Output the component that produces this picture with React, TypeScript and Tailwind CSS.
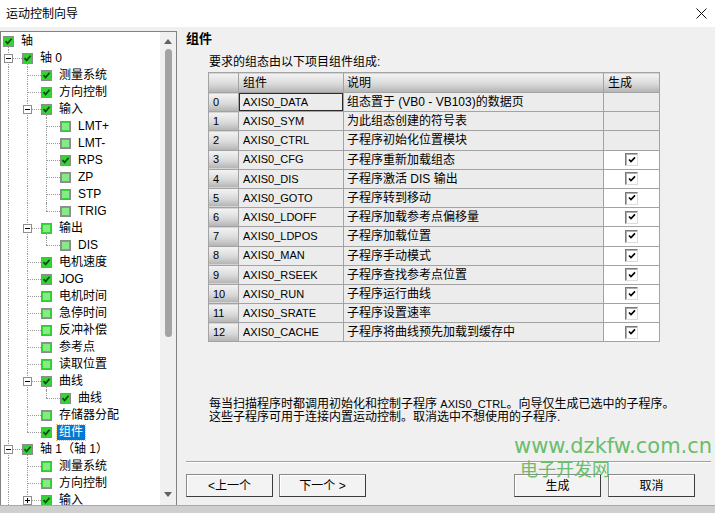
import React from 'react';

type Node = { l: number; t: string; c: boolean; e?: '-' | '+'; s?: boolean };

const tree: Node[] = [
    { l: 0, t: '轴', c: true },
    { l: 1, t: '轴 0', c: true, e: '-' },
    { l: 2, t: '测量系统', c: true },
    { l: 2, t: '方向控制', c: true },
    { l: 2, t: '输入', c: true, e: '-' },
    { l: 3, t: 'LMT+', c: false },
    { l: 3, t: 'LMT-', c: false },
    { l: 3, t: 'RPS', c: true },
    { l: 3, t: 'ZP', c: false },
    { l: 3, t: 'STP', c: false },
    { l: 3, t: 'TRIG', c: false },
    { l: 2, t: '输出', c: false, e: '-' },
    { l: 3, t: 'DIS', c: false },
    { l: 2, t: '电机速度', c: true },
    { l: 2, t: 'JOG', c: true },
    { l: 2, t: '电机时间', c: false },
    { l: 2, t: '急停时间', c: false },
    { l: 2, t: '反冲补偿', c: false },
    { l: 2, t: '参考点', c: false },
    { l: 2, t: '读取位置', c: false },
    { l: 2, t: '曲线', c: true, e: '-' },
    { l: 3, t: '曲线', c: true },
    { l: 2, t: '存储器分配', c: false },
    { l: 2, t: '组件', c: true, s: true },
    { l: 1, t: '轴 1（轴 1）', c: true, e: '-' },
    { l: 2, t: '测量系统', c: false },
    { l: 2, t: '方向控制', c: false },
    { l: 2, t: '输入', c: true, e: '+' },
];

type Row = Node & { next: boolean; path: boolean[] };

function buildRows(): Row[] {
    const stack: boolean[] = [];
    return tree.map((n, i) => {
        let next = n.l > 0;
        for (let j = i + 1; j < tree.length; j++) {
            if (tree[j].l < n.l) {
                next = false;
                break;
            }
            if (tree[j].l === n.l) {
                next = true;
                break;
            }
        }
        stack[n.l] = next;
        return { ...n, next, path: stack.slice(0, n.l + 1) };
    });
}

const ROW_H = 17;

const comps: [string, string, boolean][] = [
    ['AXIS0_DATA', '组态置于 (VB0 - VB103)的数据页', false],
    ['AXIS0_SYM', '为此组态创建的符号表', false],
    ['AXIS0_CTRL', '子程序初始化位置模块', false],
    ['AXIS0_CFG', '子程序重新加载组态', true],
    ['AXIS0_DIS', '子程序激活 DIS 输出', true],
    ['AXIS0_GOTO', '子程序转到移动', true],
    ['AXIS0_LDOFF', '子程序加载参考点偏移量', true],
    ['AXIS0_LDPOS', '子程序加载位置', true],
    ['AXIS0_MAN', '子程序手动模式', true],
    ['AXIS0_RSEEK', '子程序查找参考点位置', true],
    ['AXIS0_RUN', '子程序运行曲线', true],
    ['AXIS0_SRATE', '子程序设置速率', true],
    ['AXIS0_CACHE', '子程序将曲线预先加载到缓存中', true],
];

const GreenBox: React.FC<{ checked: boolean }> = ({ checked }) => (
    <span className="flex h-[11px] w-[11px] shrink-0 items-center justify-center border border-[#8c8c8c] bg-[#33d433]">
        {checked ? (
            <svg width="9" height="9" viewBox="0 0 9 9">
                <path d="M1.5 4.2 L3.6 6.4 L7.6 1.8" stroke="#0f4a14" strokeWidth="1.7" fill="none" />
            </svg>
        ) : (
            <span className="h-[7px] w-[7px] bg-[#86ea86]" />
        )}
    </span>
);

const Dot: React.FC<{ v?: boolean; left: number; top: number; len: number }> = ({ v, left, top, len }) =>
    v ? (
        <span
            className="absolute border-l border-dotted border-[#9a9a9a]"
            style={{ left, top, height: len }}
        />
    ) : (
        <span
            className="absolute border-t border-dotted border-[#9a9a9a]"
            style={{ left, top, width: len }}
        />
    );

const TreeRow: React.FC<{ r: Row }> = ({ r }) => {
    const L = r.l;
    const mid = Math.floor(ROW_H / 2);
    const boxLeft = 2 + 19 * L;
    const lineX = (k: number) => 7 + 19 * k;
    return (
        <div className="relative flex items-center" style={{ height: ROW_H, paddingLeft: boxLeft }}>
            {Array.from({ length: Math.max(0, L - 1) }).map((_, k) =>
                r.path[k + 1] ? <Dot key={k} v left={lineX(k)} top={0} len={ROW_H} /> : null,
            )}
            {L > 0 && (
                <>
                    <Dot v left={lineX(L - 1)} top={0} len={r.next ? ROW_H : mid} />
                    <Dot left={lineX(L - 1)} top={mid} len={boxLeft - lineX(L - 1)} />
                </>
            )}
            {r.e === '-' && <Dot v left={lineX(L)} top={mid + 5} len={ROW_H - mid - 5} />}
            {L === 0 && <Dot v left={lineX(0)} top={mid + 5} len={ROW_H - mid - 5} />}
            {r.e && (
                <span
                    className="absolute flex h-[9px] w-[9px] items-center justify-center border border-[#8e8e8e] bg-white"
                    style={{ left: lineX(L - 1) - 4, top: mid - 4 }}
                >
                    <span className="absolute h-px w-[5px] bg-black" />
                    {r.e === '+' && <span className="absolute h-[5px] w-px bg-black" />}
                </span>
            )}
            <GreenBox checked={r.c} />
            {r.s ? (
                <span className="ml-[5px] bg-[#0078d7] px-[2px] text-[12px] leading-[15px] text-white outline outline-1 outline-dotted outline-[#f0c060]">
                    {r.t}
                </span>
            ) : (
                <span className="ml-[7px] whitespace-nowrap text-[12px] leading-[15px] text-black">{r.t}</span>
            )}
        </div>
    );
};

const TableCheck: React.FC = () => (
    <span className="mx-auto flex h-[13px] w-[13px] items-center justify-center border border-t-[#7a7a7a] border-l-[#7a7a7a] border-b-[#dcdcdc] border-r-[#dcdcdc] bg-white shadow-[inset_1px_1px_0_#b0b0b0]">
        <svg width="8" height="8" viewBox="0 0 8 8">
            <path d="M1 3.5 L3 5.6 L7 1.4" stroke="#000" strokeWidth="1.6" fill="none" />
        </svg>
    </span>
);

const head = 'bg-[linear-gradient(to_bottom,#f4f4f4,#dadada_55%,#b2b2b2)]';
const cell = 'border border-[#a3a3a3]';

const Button: React.FC<{ children: React.ReactNode; className?: string }> = ({ children, className }) => (
    <div
        className={`flex h-[23px] w-[87px] items-center justify-center border border-[#8a8a8a] border-b-[#3c3c3c] border-r-[#3c3c3c] bg-[#f3f3f3] text-[12px] text-black shadow-[inset_1px_1px_0_#ffffff] ${className ?? ''}`}
    >
        {children}
    </div>
);

export default function App() {
    const rows = buildRows();
    return (
        <div className="relative flex h-[513px] w-[715px] flex-col overflow-hidden bg-[#f0f0f0] font-['Liberation_Sans','Noto_Sans_CJK_SC',sans-serif]">
            {/* title bar */}
            <div className="flex h-[27px] shrink-0 items-center justify-between bg-white pl-[6px] pr-[8px]">
                <span className="text-[12px] text-black">运动控制向导</span>
                <svg width="11" height="11" viewBox="0 0 11 11">
                    <path d="M0.5 0.5 L10.5 10.5 M10.5 0.5 L0.5 10.5" stroke="#111" strokeWidth="1" />
                </svg>
            </div>

            <div className="flex min-h-0 flex-1">
                {/* tree */}
                <div className="mt-[4px] flex w-[177px] shrink-0 border border-b-0 border-[#828282] bg-white">
                    <div className="relative min-w-0 flex-1 overflow-hidden pt-[1px]">
                        {rows.map((r, i) => (
                            <TreeRow key={i} r={r} />
                        ))}
                    </div>
                    <div className="relative flex w-[16px] shrink-0 flex-col items-center bg-[#f0f0f0]">
                        <svg className="mt-[7px]" width="8" height="5" viewBox="0 0 8 5">
                            <path d="M4 0 L8 5 L0 5 Z" fill="#606060" />
                        </svg>
                        <div className="mt-[5px] h-[288px] w-[7px] rounded-full bg-[#a3a3a3]" />
                        <div className="flex-1" />
                        <svg className="mb-[8px]" width="8" height="5" viewBox="0 0 8 5">
                            <path d="M0 0 L8 0 L4 5 Z" fill="#606060" />
                        </svg>
                    </div>
                </div>

                {/* right side */}
                <div className="flex min-w-0 flex-1 flex-col pl-[9px] pr-[4px]">
                    <div className="flex h-[24px] items-center text-[13px] font-bold text-black">组件</div>
                    <div className="ml-[23px] flex h-[21px] items-center text-[12px] text-black">
                        要求的组态由以下项目组件组成:
                    </div>
                    <table className="ml-[22px] w-[451px] table-fixed border-collapse text-[12px] text-black">
                        <colgroup>
                            <col className="w-[30px]" />
                            <col className="w-[105px]" />
                            <col className="w-[260px]" />
                            <col className="w-[56px]" />
                        </colgroup>
                        <thead>
                            <tr className="h-[20px]">
                                <th className={`${cell} ${head}`} />
                                <th className={`${cell} ${head} pl-[4px] text-left font-normal`}>组件</th>
                                <th className={`${cell} ${head} pl-[3px] text-left font-normal`}>说明</th>
                                <th className={`${cell} ${head} pl-[4px] text-left font-normal`}>生成</th>
                            </tr>
                        </thead>
                        <tbody>
                            {comps.map(([name, desc, gen], i) => (
                                <tr key={name} className="h-[19.2px]">
                                    <td className={`${cell} ${head} pl-[4px] text-[11px]`}>{i}</td>
                                    <td
                                        className={`${cell} bg-[#ececec] pl-[4px] text-[11px] ${
                                            i === 0 ? 'shadow-[inset_0_0_0_1px_#2a2a2a]' : ''
                                        }`}
                                    >
                                        {name}
                                    </td>
                                    <td className={`${cell} bg-[#ececec] pl-[3px] whitespace-nowrap`}>{desc}</td>
                                    <td className={`${cell} ${gen ? 'bg-white' : 'bg-[#ececec]'}`}>
                                        {gen && <TableCheck />}
                                    </td>
                                </tr>
                            ))}
                        </tbody>
                    </table>

                    <div className="ml-[23px] mt-[56px] text-[12px] leading-[13px] text-black">
                        <p>
                            每当扫描程序时都调用初始化和控制子程序 <span className="text-[11px]">AXIS0_CTRL</span>
                            。向导仅生成已选中的子程序。
                        </p>
                        <p>这些子程序可用于连接内置运动控制。取消选中不想使用的子程序.</p>
                    </div>

                    <div className="mt-[37px] mr-[0px] h-[2px] border-t border-b border-t-[#a0a0a0] border-b-white" />

                    <div className="mt-[11px] flex">
                        <Button>&lt;上一个</Button>
                        <Button className="ml-[6px]">下一个 &gt;</Button>
                        <div className="flex-1" />
                        <Button className="text-[#444]">生成</Button>
                        <Button className="ml-[7px] mr-[16px]">取消</Button>
                    </div>
                </div>
            </div>

            <div className="h-[8px] shrink-0 border-t border-[#a8a8a8] bg-[#cfcfcf]" />

            {/* watermark */}
            <div className="pointer-events-none absolute left-[514px] top-[434px] flex flex-col text-[#5cb85c] opacity-90">
                <span className="font-['DejaVu_Sans',sans-serif] text-[21px] leading-[24px]">www.dzkfw.com.cn</span>
                <span className="ml-[6px] font-['Noto_Sans_CJK_SC',sans-serif] text-[18px] leading-[20px]">
                    电子开发网
                </span>
            </div>
        </div>
    );
}
